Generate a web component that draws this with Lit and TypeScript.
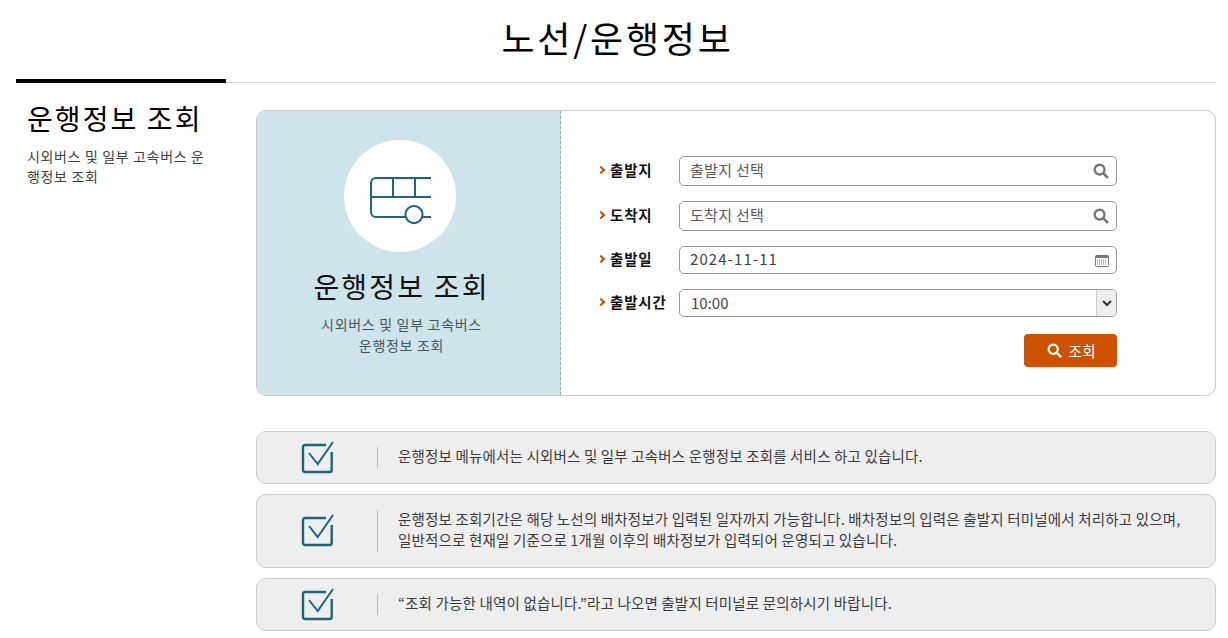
import { LitElement, html, css, svg } from "lit";
import { customElement } from "lit/decorators.js";

const searchIcon = (c: string, s = 16) => html`<svg class="ico" width=${s} height=${s} viewBox="0 0 16 16" fill="none"><circle cx="6.6" cy="6.6" r="4.9" stroke=${c} stroke-width="2.4"/><path d="M10.4 10.4 15 15" stroke=${c} stroke-width="2.6"/></svg>`;
const check = svg`<svg width="34" height="34" viewBox="0 0 34 34" fill="none"><path d="M30.7 11V29a2 2 0 0 1-2 2H4a2 2 0 0 1-2-2V6a2 2 0 0 1 2-2H25" stroke="#1f6478" stroke-width="2.4"/><path d="M8 12 16.7 23 32 1" stroke="#1f6478" stroke-width="2"/></svg>`;

@customElement("app-root")
export class AppRoot extends LitElement {
  static styles = css`
    :host { display: block; background: #fff; font-family: "Noto Sans CJK KR", "Liberation Sans", sans-serif; color: #333; height: 638px; overflow: hidden; }
    h1 { margin: 0; height: 79px; font-size: 36px; font-weight: 400; line-height: 75px; text-align: center; color: #000; letter-spacing: 2.75px; padding-left: 7px; box-sizing: border-box; }
    .wrap { margin: 0 12px 0 16px; }
    .rule { border-bottom: 1px solid #d4d4d4; height: 3px; }
    .rule div { width: 210px; height: 4px; background: #000; }
    .main { display: grid; grid-template-columns: 210px 960px; column-gap: 30px; padding-top: 27px; }
    .side { padding: 0 0 0 11px; margin-top: -5px; }
    .side h2 { margin: 0; font-size: 28px; font-weight: 400; line-height: 26px; color: #000; letter-spacing: 2.1px; }
    .side p { margin: 15px 0 0; font-size: 14px; line-height: 20px; color: #3f3f3f; width: 180px; letter-spacing: 0.65px; word-break: break-all; }
    .card { display: flex; height: 286px; box-sizing: border-box; border: 1px solid #c8c8c8; border-radius: 10px; overflow: hidden; }
    .panel { width: 304px; box-sizing: border-box; background: #cfe3ea; border-right: 1px dashed #9aa8ae; display: flex; flex-direction: column; align-items: center; padding: 29px 18px 0 0; }
    .circle { width: 112px; height: 112px; border-radius: 50%; background: #fff; display: flex; align-items: center; justify-content: center; }
    .circle svg { margin: 8px 0 0 2px; }
    .panel h3 { margin: 15px 0 0 4px; font-size: 28px; font-weight: 400; line-height: 38px; color: #111; letter-spacing: 2.2px; }
    .panel p { margin: 9px 0 0 4px; font-size: 14px; line-height: 21px; color: #46565c; text-align: center; letter-spacing: 0.7px; }
    .form { flex: 1; padding: 45px 98px 0 39px; display: flex; flex-direction: column; }
    .row { display: flex; align-items: center; margin-bottom: 15px; height: 30px; }
    .row.tight { height: 28px; }
    .row.tight + .row.tight { margin-bottom: 0; }
    .lab { width: 79px; font-size: 14.5px; font-weight: 700; color: #111; display: flex; align-items: center; gap: 6px; white-space: nowrap; letter-spacing: 0.8px; margin-top: -3px; }
    .lab::before { content: ""; width: 4px; height: 4px; border-top: 2px solid #c2500a; border-right: 2px solid #c2500a; transform: rotate(45deg); margin-left: -2px; }
    .field { flex: 1; height: 100%; box-sizing: border-box; border: 1px solid #999; border-radius: 5px; display: flex; align-items: center; justify-content: space-between; padding-left: 10px; font-size: 15px; letter-spacing: 0.3px; color: #5a5a5a; background: #fff; overflow: hidden; }
    .field > span:first-child { margin-top: -3px; }
    .field .ico, .field .cal { margin-right: 7px; }
    .date { letter-spacing: 1.1px; color: #444; }
    .time { padding-right: 0; letter-spacing: 0; color: #444; }
    .time > span:first-child { margin: -2px 0 0 1px; }
    .arrow { width: 19px; height: 100%; background: #eee; border-left: 1px solid #ccc; display: flex; align-items: center; justify-content: center; }
    .actions { display: flex; justify-content: flex-end; margin-top: 17px; }
    .btn { width: 93px; height: 33px; background: #cc5200; border-radius: 4px; color: #fff; font-size: 15px; display: flex; align-items: center; justify-content: center; gap: 6px; padding-left: 2px; box-sizing: border-box; }
    .notes { display: flex; flex-direction: column; gap: 10px; margin-top: 35px; }
    .note { display: grid; grid-template-columns: 120px 1fr; align-items: center; box-sizing: border-box; background: #eeeeee; border: 1px solid #ccc; border-radius: 10px; padding: 15px 0; }
    .note .i { display: flex; padding-left: 44px; height: 21px; align-items: center; }
    .note .t { border-left: 1px solid #bbb; padding: 0 20px; font-size: 14.5px; line-height: 21px; color: #3a3a3a; letter-spacing: 0.17px; }
    .note .t div { margin: -2px 0 2px; }
  `;
  render() {
    const notes = [
      html`운행정보 메뉴에서는 시외버스 및 일부 고속버스 운행정보 조회를 서비스 하고 있습니다.`,
      html`운행정보 조회기간은 해당 노선의 배차정보가 입력된 일자까지 가능합니다. 배차정보의 입력은 출발지 터미널에서 처리하고 있으며,<br />일반적으로 현재일 기준으로 1개월 이후의 배차정보가 입력되어 운영되고 있습니다.`,
      html`“조회 가능한 내역이 없습니다.”라고 나오면 출발지 터미널로 문의하시기 바랍니다.`,
    ];
    return html`
      <h1>노선/운행정보</h1>
      <div class="wrap">
        <div class="rule"><div></div></div>
        <div class="main">
          <div class="side">
            <h2>운행정보 조회</h2>
            <p>시외버스 및 일부 고속버스 운행정보 조회</p>
          </div>
          <div>
            <div class="card">
              <div class="panel">
                <div class="circle">
                  <svg width="62" height="48" viewBox="0 0 62 48" fill="none" stroke="#1f6478" stroke-width="2">
                    <path d="M61 2H6a5 5 0 0 0-5 5v29a5 5 0 0 0 5 5h29M53 41h8M1 21h60M23 2v19M45 2v19"/>
                    <circle cx="44" cy="38.5" r="8.6"/>
                  </svg>
                </div>
                <h3>운행정보 조회</h3>
                <p>시외버스 및 일부 고속버스<br />운행정보 조회</p>
              </div>
              <div class="form">
                <div class="row"><div class="lab">출발지</div><div class="field"><span>출발지 선택</span>${searchIcon("#777")}</div></div>
                <div class="row"><div class="lab">도착지</div><div class="field"><span>도착지 선택</span>${searchIcon("#777")}</div></div>
                <div class="row tight"><div class="lab">출발일</div><div class="field"><span class="date">2024-11-11</span>
                  <svg class="cal" width="14" height="13" viewBox="0 0 14 13" fill="none"><rect x=".5" y="1.5" width="13" height="11" rx="1" fill="#fff" stroke="#777"/><path d="M1 1h12v3H1z" fill="#777"/><path d="M2 6h10M2 8h10M2 10h10" stroke="#777" stroke-dasharray="1 1"/></svg></div></div>
                <div class="row tight"><div class="lab">출발시간</div><div class="field time"><span>10:00</span><div class="arrow"><svg width="10" height="7" viewBox="0 0 10 7" fill="none"><path d="M1 1l4 4 4-4" stroke="#333" stroke-width="2"/></svg></div></div></div>
                <div class="actions"><div class="btn">${searchIcon("#fff", 15)}<span>조회</span></div></div>
              </div>
            </div>
            <div class="notes">
              ${notes.map((n) => html`<div class="note"><div class="i">${check}</div><div class="t"><div>${n}</div></div></div>`)}
            </div>
          </div>
        </div>
      </div>
    `;
  }
}
